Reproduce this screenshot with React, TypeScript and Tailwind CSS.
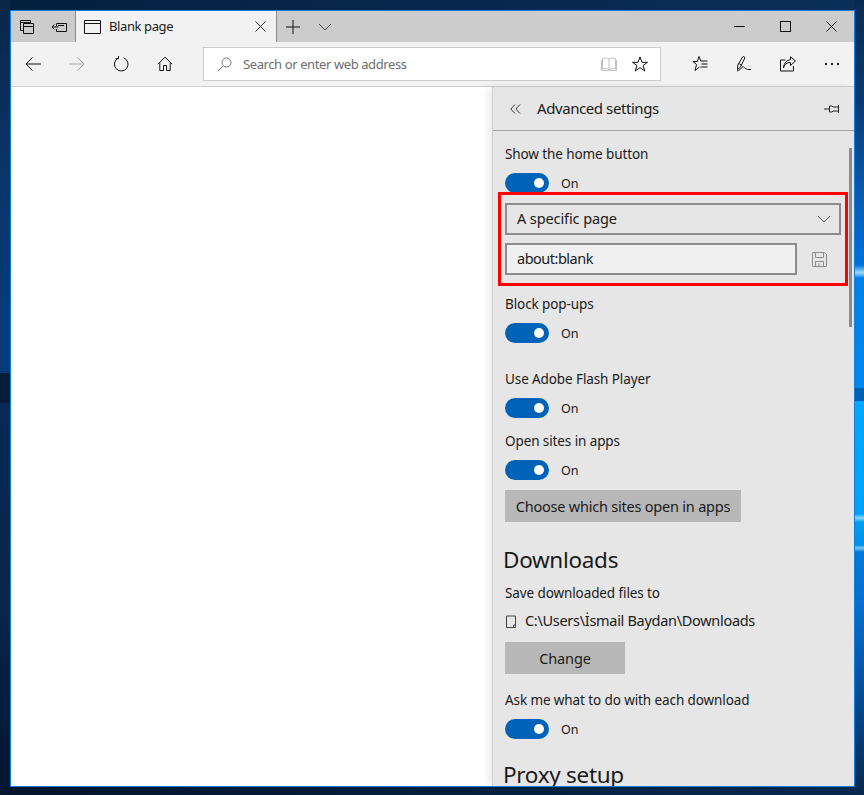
import React from "react";

const I = ({ w = 16, h = 16, c = "#111", sw = 1, children }: { w?: number; h?: number; c?: string; sw?: number; children: React.ReactNode }) => (
  <svg width={w} height={h} viewBox={`0 0 ${w} ${h}`} fill="none" stroke={c} strokeWidth={sw}>
    {children}
  </svg>
);

const Toggle = () => (
  <div className="flex items-center h-5">
    <div className="w-11 h-5 rounded-full bg-[#0063b8] flex items-center justify-end pr-[5px]">
      <div className="w-[10px] h-[10px] rounded-full bg-white" />
    </div>
    <span className="ml-3 pt-[2px] text-[12.5px] text-[#1a1a1a]">On</span>
  </div>
);

const Label = ({ children, className = "" }: { children: React.ReactNode; className?: string }) => (
  <div className={`h-5 leading-[20px] text-[13.5px] text-[#1a1a1a] tracking-[-0.1px] ${className}`}>{children}</div>
);

const Box = ({ w, children, className = "" }: { w: number; children: React.ReactNode; className?: string }) => (
  <div style={{ width: w }} className={`shrink-0 h-full flex items-center justify-center ${className}`}>
    {children}
  </div>
);

export default function App() {
  return (
    <div className="w-[864px] h-[795px] pl-[10px] pt-[10px] overflow-hidden font-['Noto_Sans',sans-serif] [background:linear-gradient(180deg,#0a2a50_0px,#083a70_100px,#0a5cb0_200px,#0070d8_265px,#7cc4f0_271px,#a0d4f4_273px,#0080e8_278px,#0088ee_388px,#0060b0_388px,#0060b0_401px,#00a8ff_401px,#00a0f8_514px,#90d8f8_518px,#00a0f0_522px,#0090e8_545px,#80c8f0_548px,#0078d8_552px,#0a70d0_600px,#064a90_700px,#08284d_795px)_right/9px_100%_no-repeat,linear-gradient(180deg,#0a2747_0px,#0a3468_165px,#063a78_300px,#063a78_373px,#051d3a_373px,#051d3a_403px,#082a56_403px,#08264c_600px,#031630_795px)_left/10px_100%_no-repeat,linear-gradient(90deg,#04203f,#0a2f5a)_top/100%_10px_no-repeat,linear-gradient(90deg,#03142b,#06294f)_bottom/100%_10px_no-repeat,#0a2f5a]">
      <div className="w-[845px] h-[777px] border border-[#0d7fe0] bg-white flex flex-col overflow-hidden">
        {/* Title bar */}
        <div className="h-[31px] bg-[#cccccc] flex shrink-0">
          <Box w={32}>
            <I w={16} h={16}>
              <path d="M1.5 6.5V1.5H11.5V4.5M1.5 3.5H11.5M4.5 4.5H14.5V14.5H4.5ZM4.5 7.5H14.5" />
              <path d="M1.5 6.5V11.5H4.5" />
            </I>
          </Box>
          <Box w={33} className="border-r border-[#8c8c8c]">
            <I w={16} h={14}>
              <path d="M5.5 3.5H15.5V11.5H5.5V9M5.5 6V3.5M7.5 7H1M3.5 4.5L1 7L3.5 9.5M7 5.5H13" />
            </I>
          </Box>
          <div className="w-[201px] bg-[#f2f2f2] border-r border-[#8c8c8c] flex items-center pl-2 text-[13px] text-[#1a1a1a] shrink-0">
            <I w={17} h={14}>
              <path d="M0.5 0.5H16.5V13.5H0.5ZM0.5 3.5H16.5" />
            </I>
            <span className="ml-2 flex-1 tracking-[-0.4px]">Blank page</span>
            <span className="mr-[10px] flex">
              <I w={11} h={11} c="#333">
                <path d="M0.5 0.5L10.5 10.5M10.5 0.5L0.5 10.5" />
              </I>
            </span>
          </div>
          <Box w={32}>
            <I w={14} h={14}>
              <path d="M7 0V14M0 7H14" />
            </I>
          </Box>
          <Box w={32}>
            <I w={14} h={8} c="#444">
              <path d="M1 1L7 7L13 1" />
            </I>
          </Box>
          <div className="flex-1" />
          <Box w={46}>
            <I w={11} h={1}>
              <path d="M0 0.5H11" />
            </I>
          </Box>
          <Box w={46}>
            <I w={11} h={11}>
              <rect x="0.5" y="0.5" width="10" height="10" />
            </I>
          </Box>
          <Box w={46}>
            <I w={11} h={11}>
              <path d="M0.5 0.5L10.5 10.5M10.5 0.5L0.5 10.5" />
            </I>
          </Box>
        </div>

        {/* Toolbar */}
        <div className="h-[45px] bg-[#f2f2f2] border-b border-[#cfcfcf] flex items-center shrink-0">
          <Box w={44}>
            <I w={16} h={14}>
              <path d="M16 7H1M7.5 0.5L1 7L7.5 13.5" />
            </I>
          </Box>
          <Box w={44}>
            <I w={16} h={14} c="#a8a8a8">
              <path d="M0 7H15M8.5 0.5L15 7L8.5 13.5" />
            </I>
          </Box>
          <Box w={44}>
            <I w={16} h={16}>
              <path d="M5 2.2A6.8 6.8 0 1 0 10.6 1.8" />
              <path d="M5.5 0V2.7H2.5" />
            </I>
          </Box>
          <Box w={44}>
            <I w={16} h={16}>
              <path d="M0.8 8.2L8 1.2L15.2 8.2M2.8 6.5V14.5H6.5V9.5H9.5V14.5H13.2V6.5" />
            </I>
          </Box>
          <div className="w-[458px] h-[34px] ml-4 bg-white border border-[#cccccc] flex items-center shrink-0">
            <span className="ml-[13px] flex">
              <I w={15} h={15} c="#777">
                <circle cx="9.5" cy="5.5" r="4.5" />
                <path d="M6.2 8.8L0.8 14.2" />
              </I>
            </span>
            <span className="ml-[11px] pt-px flex-1 text-[13px] text-[#6e6e6e] tracking-[-0.4px]">Search or enter web address</span>
            <span className="flex mr-[15px]">
              <I w={16} h={14} c="#c0c0c0">
                <path d="M8 2C6 0.8 3 0.8 1.5 1.5V12C3 11.3 6 11.3 8 12.5C10 11.3 13 11.3 14.5 12V1.5C13 0.8 10 0.8 8 2ZM8 2V12.5M0.5 3V13.5H15.5V3" />
              </I>
            </span>
            <span className="flex mr-3">
              <I w={16} h={16}>
                <path d="M8 1L10 6.3H15.5L11 9.6L12.8 15L8 11.7L3.2 15L5 9.6L0.5 6.3H6Z" />
              </I>
            </span>
          </div>
          <div className="ml-[17px] flex">
            <div className="w-11 flex justify-center">
              <I w={16} h={16}>
                <path d="M7 0.5L8.7 5H15.5M1 5.5H5.3L7 0.5M1 5.5L4.5 8.5L3 14.5L7.5 11M9.5 8H15.5M8.5 11H15.5" />
              </I>
            </div>
            <div className="w-11 flex justify-center">
              <I w={16} h={16}>
                <path d="M1.5 13.5L1.8 9L6.5 1C7.5 0 9 0.6 8.8 2L4.5 11ZM3 7.5L5.8 9.5M1 15C3 15 5 12 7 10.5C8.5 11 9 14 15 13.5" />
              </I>
            </div>
            <div className="w-[43px] flex justify-center">
              <I w={16} h={16}>
                <path d="M5.5 4H0.5V15H13.5V10M3.5 12C4.5 8 7 6.5 10.5 6.5V9.5L15.5 5L10.5 0.8V3.8C7 4 4 6.5 3.5 12Z" />
              </I>
            </div>
            <div className="w-[45px] flex justify-center items-center gap-[4px]">
              <span className="w-[2px] h-[2px] bg-[#222]" />
              <span className="w-[2px] h-[2px] bg-[#222]" />
              <span className="w-[2px] h-[2px] bg-[#222]" />
            </div>
          </div>
        </div>

        {/* Content */}
        <div className="flex-1 flex min-h-0 bg-white">
          <div className="flex-1" />
          <div className="relative w-[362px] shrink-0 bg-[#e6e6e6] border-l border-[#cfcfcf] shadow-[-4px_0_8px_rgba(0,0,0,0.08)] overflow-hidden flex flex-col">
            <div className="h-[44px] shrink-0 border-b border-[#a3a3a3] flex items-center relative">
              <span className="ml-[17px] flex">
                <I w={11} h={10} c="#333">
                  <path d="M5 0.5L0.8 5L5 9.5M10 0.5L5.8 5L10 9.5" />
                </I>
              </span>
              <span className="ml-[16px] flex-1 text-[15px] text-[#1a1a1a] tracking-[-0.42px]">Advanced settings</span>
              <span className="mr-[14px] flex">
                <I w={16} h={10} c="#222">
                  <path d="M0 5H5M5.5 2H8L9 3H14.5V7H9L8 8H5.5V2ZM14.5 1V9" />
                </I>
              </span>
            </div>

            <div className="absolute left-[356px] top-[61px] w-[3px] h-[179px] bg-[#8c8c8c]" />

            <div className="pl-3 pt-[13px] flex flex-col items-start w-[354px] text-[#1a1a1a]">
              <Label>Show the home button</Label>
              <div className="mt-[9px]"><Toggle /></div>

              <div className="-mt-px -ml-[7px] w-[350px] h-[94px] border-[3px] border-[#ff0000] pl-1 pt-2 pr-1 flex flex-col gap-2">
                <div className="w-[336px] h-8 border-2 border-[#8c8c8c] flex items-center justify-between pl-[10px] pr-[8px] text-[14.5px] tracking-[-0.1px]">
                  <span>A specific page</span>
                  <I w={14} h={8} c="#555">
                    <path d="M1 1L7 7L13 1" />
                  </I>
                </div>
                <div className="flex items-center">
                  <div className="w-[292px] h-8 border-2 border-[#8c8c8c] bg-[#f0f0f0] flex items-center pl-[10px] text-[14.5px] tracking-[-0.5px]">about:blank</div>
                  <span className="ml-[15px] flex">
                    <I w={15} h={15} c="#8c8c8c">
                      <path d="M0.5 0.5H12.5L14.5 2.5V14.5H0.5ZM3.5 0.5V5.5H11.5V0.5M3.5 14.5V9.5H11.5V14.5M7 11V14" />
                    </I>
                  </span>
                </div>
              </div>

              <Label className="mt-2">Block pop-ups</Label>
              <div className="mt-[9px]"><Toggle /></div>

              <Label className="mt-[26px]">Use Adobe Flash Player</Label>
              <div className="mt-[9px]"><Toggle /></div>

              <Label className="mt-[13px]">Open sites in apps</Label>
              <div className="mt-[9px]"><Toggle /></div>

              <div className="mt-[10px] pt-px w-[236px] h-8 bg-[#b8b8b8] flex items-center justify-center text-[14.5px] tracking-[-0.22px]">Choose which sites open in apps</div>

              <div className="mt-[22px] -ml-[2px] h-8 leading-8 text-[22.5px] tracking-[-0.3px]">Downloads</div>
              <Label className="mt-[7px]">Save downloaded files to</Label>
              <div className="mt-2 h-5 flex items-center text-[14.5px] tracking-[-0.3px]">
                <span className="flex ml-px">
                  <I w={10} h={13} c="#444">
                    <path d="M0.5 1H9.5V12.5H0.5ZM7.5 12.5V10H9.5" />
                  </I>
                </span>
                <span className="ml-[9px]">C:\Users\İsmail Baydan\Downloads</span>
              </div>
              <div className="mt-[11px] pt-px w-[120px] h-8 bg-[#b8b8b8] flex items-center justify-center text-[14.5px] tracking-[-0.1px]">Change</div>
              <Label className="mt-4">Ask me what to do with each download</Label>
              <div className="mt-[9px]"><Toggle /></div>
              <div className="mt-5 -ml-[2px] h-7 leading-8 text-[22.5px] tracking-[-0.3px] whitespace-nowrap">Proxy setup</div>
            </div>
          </div>
        </div>
      </div>
    </div>
  );
}
